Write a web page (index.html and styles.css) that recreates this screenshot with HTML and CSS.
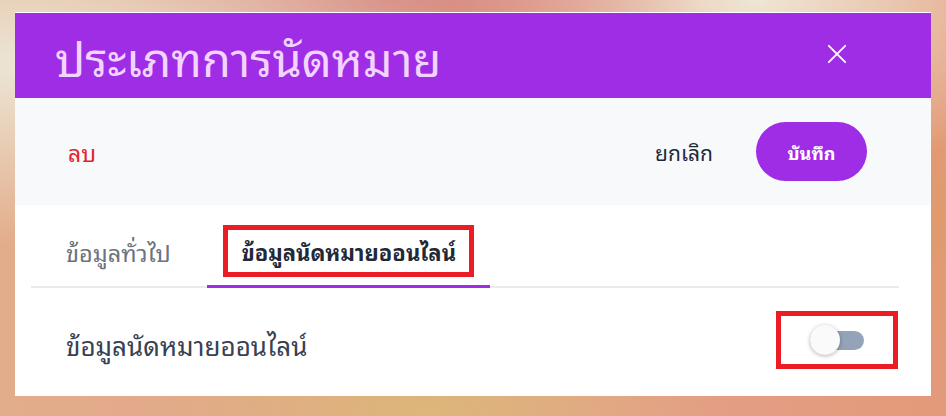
FILE: index.html
```html
<!DOCTYPE html>
<html lang="th">
<head>
  <meta charset="UTF-8">
  <meta name="viewport" content="width=device-width, initial-scale=1.0">
  <title>ประเภทการนัดหมาย</title>
  <link rel="stylesheet" href="styles.css">
</head>
<body>
  <div class="modal">
    <div class="modal-header">
      <span class="modal-title">ประเภทการนัดหมาย</span>
      <button class="close-btn" aria-label="close">
        <svg width="22" height="22" viewBox="0 0 22 22">
          <path d="M2 2 L20 20 M20 2 L2 20" stroke="#fff" stroke-width="2" stroke-linecap="round"/>
        </svg>
      </button>
    </div>
    <div class="modal-actions">
      <button class="btn-delete">ลบ</button>
      <div class="actions-right">
        <button class="btn-cancel">ยกเลิก</button>
        <button class="btn-save">บันทึก</button>
      </div>
    </div>
    <div class="tabs">
      <div class="tab">ข้อมูลทั่วไป</div>
      <div class="tab active"><span class="mark">ข้อมูลนัดหมายออนไลน์</span></div>
    </div>
    <div class="setting-row">
      <span class="setting-label">ข้อมูลนัดหมายออนไลน์</span>
      <div class="mark mark-toggle">
        <div class="toggle"><div class="knob"></div></div>
      </div>
    </div>
  </div>
</body>
</html>
```

FILE: styles.css
```css
body {
  margin: 0;
  height: 416px;
  overflow: hidden;
  font-family: 'Noto Sans Thai Looped', 'Noto Serif Thai', 'Loma', 'Garuda', 'Waree', 'Tahoma', 'Noto Sans', 'Noto Sans Thai', sans-serif;
  background:
    radial-gradient(ellipse at 3% 15%, #ece6d6 0%, rgba(236, 230, 214, 0) 35%),
    radial-gradient(ellipse at 40% 0%, #d68880 0%, rgba(214, 136, 128, 0) 40%),
    radial-gradient(ellipse at 80% 0%, #eee6d4 0%, rgba(238, 230, 212, 0) 30%),
    radial-gradient(ellipse at 100% 50%, #e09a6e 0%, rgba(224, 154, 110, 0) 50%),
    radial-gradient(ellipse at 45% 100%, #dcb779 0%, rgba(220, 183, 121, 0) 40%),
    linear-gradient(90deg, #e2ad8a, #e4a08a 60%, #e39a7a);
  padding: 12px 15px 0 15px;
}

.modal {
  width: 916px;
  height: 384px;
  background-color: #fff;
  border-top: 1px solid #fff;
  box-sizing: border-box;
  display: flex;
  flex-direction: column;
}

.modal-header {
  height: 85px;
  background-color: #a02de6;
  display: flex;
  justify-content: space-between;
  align-items: center;
  padding: 0 84px 0 40px;
}

.modal-title {
  color: #f1d4ff;
  font-size: 47px;
  line-height: 1;
}

.close-btn {
  background: none;
  border: none;
  padding: 0 0 4px 0;
  display: flex;
}

.close-btn svg {
  width: 20px;
  height: 20px;
}

.modal-actions {
  height: 107px;
  background-color: #f8f9fb;
  display: flex;
  justify-content: space-between;
  align-items: center;
  padding: 0 64px 0 53px;
}

.modal-actions button {
  font-family: inherit;
  border: none;
  background: none;
  padding: 0;
  font-size: 21px;
  cursor: pointer;
}

.modal-actions .btn-delete {
  color: #e3262e;
  font-size: 23px;
}

.actions-right {
  display: flex;
  align-items: center;
  gap: 43px;
}

.btn-cancel {
  color: #1f2937;
}

.modal-actions .btn-save {
  background-color: #a02de6;
  color: #fff;
  font-weight: bold;
  font-size: 18px;
  width: 111px;
  height: 59px;
  border-radius: 30px;
}

.tabs {
  display: flex;
  margin: 0 32px 0 16px;
  border-bottom: 2px solid #e8eaef;
  padding-top: 21px;
}

.tab {
  padding: 0 36px 8px 35px;
  height: 62px;
  display: flex;
  align-items: center;
  font-size: 23.5px;
  color: #6b7280;
  margin-bottom: -2px;
  border-bottom: 3px solid transparent;
  box-sizing: border-box;
}

.tab.active {
  font-size: 22px;
  color: #1f2937;
  font-weight: bold;
  border-bottom-color: #a02de6;
  padding: 0 16px 10px 16px;
}

.mark {
  border: 5px solid #ec1c24;
  padding: 3px 13px 3px 14px;
}

.setting-row {
  flex: 1;
  display: flex;
  justify-content: space-between;
  align-items: center;
  padding: 0 33px 4px 51px;
}

.setting-label {
  font-size: 26px;
  color: #374151;
  padding-top: 8px;
}

.mark-toggle {
  width: 122px;
  height: 58px;
  box-sizing: border-box;
  padding: 0;
  display: flex;
  justify-content: center;
  align-items: center;
}

.toggle {
  width: 54px;
  height: 19px;
  border-radius: 10px;
  background-color: #94a3b8;
  position: relative;
}

.knob {
  position: absolute;
  left: 0;
  top: -6px;
  width: 30px;
  height: 30px;
  border-radius: 50%;
  background-color: #fafafa;
  box-shadow: 0 1px 4px rgba(0, 0, 0, 0.3);
}
```
